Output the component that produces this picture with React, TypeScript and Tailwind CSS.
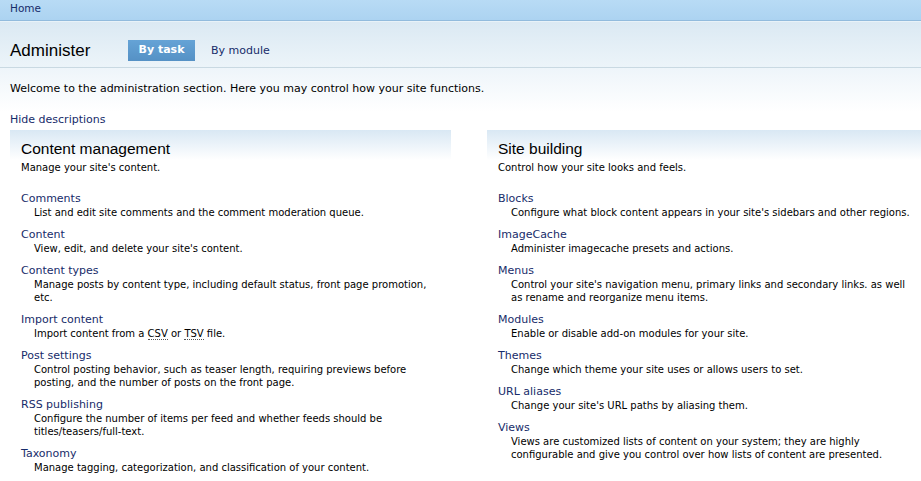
import React from "react";

type Item = { title: string; desc: React.ReactNode };

const left: Item[] = [
  { title: "Comments", desc: "List and edit site comments and the comment moderation queue." },
  { title: "Content", desc: "View, edit, and delete your site's content." },
  { title: "Content types", desc: "Manage posts by content type, including default status, front page promotion, etc." },
  {
    title: "Import content",
    desc: (
      <>
        Import content from a <abbr className="no-underline border-b border-dotted border-[#555]">CSV</abbr> or{" "}
        <abbr className="no-underline border-b border-dotted border-[#555]">TSV</abbr> file.
      </>
    ),
  },
  { title: "Post settings", desc: "Control posting behavior, such as teaser length, requiring previews before posting, and the number of posts on the front page." },
  { title: "RSS publishing", desc: "Configure the number of items per feed and whether feeds should be titles/teasers/full-text." },
  { title: "Taxonomy", desc: "Manage tagging, categorization, and classification of your content." },
];

const right: Item[] = [
  { title: "Blocks", desc: "Configure what block content appears in your site's sidebars and other regions." },
  { title: "ImageCache", desc: "Administer imagecache presets and actions." },
  {
    title: "Menus",
    desc: (
      <>
        Control your site's navigation menu, primary links and secondary links. as well
        <br />
        as rename and reorganize menu items.
      </>
    ),
  },
  { title: "Modules", desc: "Enable or disable add-on modules for your site." },
  { title: "Themes", desc: "Change which theme your site uses or allows users to set." },
  { title: "URL aliases", desc: "Change your site's URL paths by aliasing them." },
  { title: "Views", desc: "Views are customized lists of content on your system; they are highly configurable and give you control over how lists of content are presented." },
];

function Panel({ title, sub, items, descWidth }: { title: string; sub: string; items: Item[]; descWidth: string }) {
  return (
    <div className="flex flex-col">
      <div className="h-[30px] bg-gradient-to-b from-[#d9e8f4] to-white pl-[11px] pt-[10px]">
        <h3 className="font-['Liberation_Sans',Arial,sans-serif] text-[15.5px] leading-[18px] text-black">{title}</h3>
      </div>
      <p className="pl-[11px] pt-[1px] text-[10px] leading-[14px] text-black">{sub}</p>
      <dl className="mt-[17px] flex flex-col gap-[9px] pl-[11px]">
        {items.map((it) => (
          <div key={it.title}>
            <dt className="text-[11px] leading-[14px] text-[#172c6a]">{it.title}</dt>
            <dd className={`pl-[13px] text-[10px] leading-[13px] text-black ${descWidth}`}>{it.desc}</dd>
          </div>
        ))}
      </dl>
    </div>
  );
}

export default function App() {
  return (
    <div className="w-[921px] h-[481px] overflow-hidden bg-white font-['DejaVu_Sans',Verdana,sans-serif] text-black">
      <div className="h-[21px] bg-gradient-to-b from-[#b8dbf5] to-[#acd3f1] border-b border-[#92bbdd] pl-[10px] pt-[1px] text-[10.5px] leading-[14px] text-[#172c6a]">
        Home
      </div>
      <div className="h-[47px] border-t border-[#e8f2f8] bg-gradient-to-b from-[#dbe9f3] to-[#ecf4f9] border-b border-b-[#c9d9e2] flex items-start pt-[18px] pl-[10px]">
        <h1 className="font-['Liberation_Sans',Arial,sans-serif] text-[17px] leading-[21px] text-black w-[118px]">Administer</h1>
        <span className="h-[21px] w-[67px] flex items-center justify-center bg-gradient-to-b from-[#65a3d6] to-[#5591c5] text-white font-bold text-[11px]">By task</span>
        <span className="ml-[16px] text-[11px] leading-[21px] text-[#172c6a]">By module</span>
      </div>
      <div className="bg-gradient-to-b from-[#eef5fa] to-white h-[44px] pl-[10px] pt-[14px]">
        <p className="text-[11px] leading-[14px]">Welcome to the administration section. Here you may control how your site functions.</p>
      </div>
      <div className="pl-[10px] pt-[1px] h-[18px] text-[11px] leading-[14px] text-[#172c6a]">Hide descriptions</div>
      <div className="flex gap-[36px] pl-[10px]">
        <div className="w-[441px] shrink-0">
          <Panel title="Content management" sub="Manage your site's content." items={left} descWidth="max-w-[420px]" />
        </div>
        <div className="flex-1">
          <Panel title="Site building" sub="Control how your site looks and feels." items={right} descWidth="" />
        </div>
      </div>
    </div>
  );
}
